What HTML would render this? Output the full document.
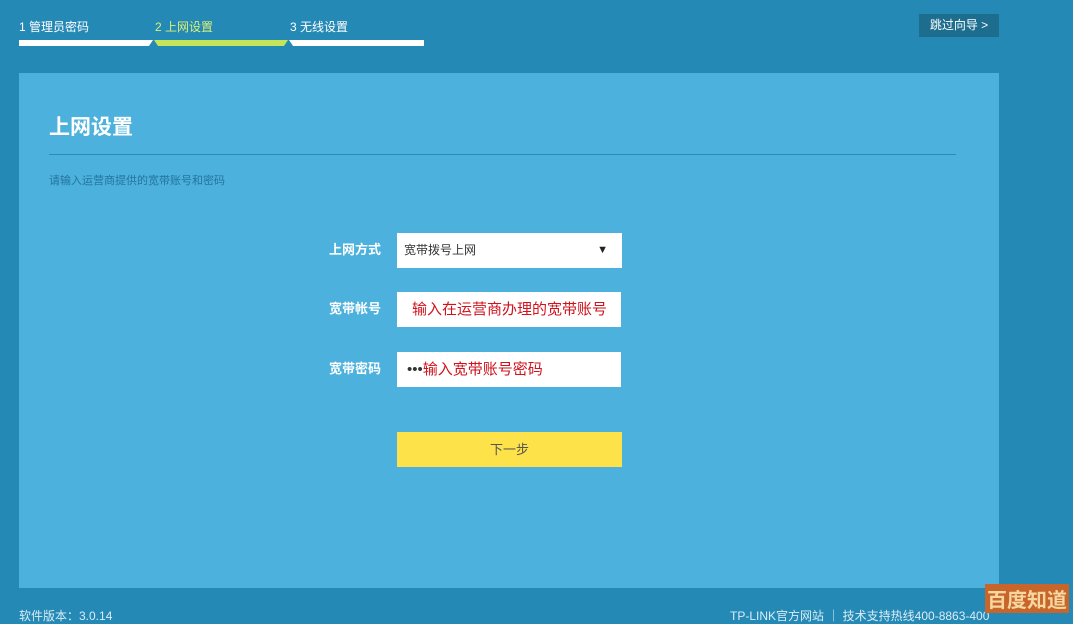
<!DOCTYPE html>
<html><head><meta charset="utf-8"><style>
*{margin:0;padding:0;box-sizing:border-box}
body{width:1073px;height:615px;overflow:hidden;background:#2589b6;font-family:"Liberation Sans","Noto Sans CJK SC",sans-serif;position:relative;color:#fff}
.step{position:absolute;top:18px;font-size:12px}
.bar{position:absolute;top:40px;height:6px}
.skip{position:absolute;left:919px;top:14px;width:80px;height:23px;background:#1c6d8e;font-size:12px;line-height:23px;text-align:center}
.panel{position:absolute;left:19px;top:73px;width:980px;height:515px;background:#4cb1dc}
h1{position:absolute;left:30px;top:38px;font-size:21px;font-weight:bold}
.hr{position:absolute;left:30px;top:81px;width:907px;height:1px;background:#2d8ab6}
.desc{position:absolute;left:30px;top:99px;font-size:11px;color:#2574a0}
.lbl{position:absolute;left:290px;width:72px;text-align:right;font-size:13px;font-weight:bold}
.inp{position:absolute;left:378px;width:224px;height:35px;background:#fff;font-size:15px;color:#d0121b;line-height:35px;padding-left:15px}
.btn{position:absolute;left:378px;top:359px;width:225px;height:35px;background:#fde24a;color:#555;font-size:13px;text-align:center;line-height:35px}
.foot{position:absolute;top:607px;font-size:12px;color:#d8ecf6}
</style></head><body>
<div class="step" style="left:19px">1 管理员密码</div>
<div class="step" style="left:155px;color:#d8f07a">2 上网设置</div>
<div class="step" style="left:290px">3 无线设置</div>
<div class="bar" style="left:19px;width:134px;background:#fff;clip-path:polygon(0 0,100% 0,97% 100%,0 100%)"></div>
<div class="bar" style="left:154px;width:134px;background:#c4e55a;clip-path:polygon(0 0,100% 0,97% 100%,3% 100%)"></div>
<div class="bar" style="left:289px;width:135px;background:#fff;clip-path:polygon(0 0,100% 0,100% 100%,3% 100%)"></div>
<div class="skip">跳过向导 &gt;</div>
<div class="panel">
<h1>上网设置</h1>
<div class="hr"></div>
<div class="desc">请输入运营商提供的宽带账号和密码</div>
<div class="lbl" style="top:166px">上网方式</div>
<div class="inp" style="top:160px;color:#333;font-size:12px;padding-left:7px;left:378px;width:225px">宽带拨号上网<span style="position:absolute;right:14px;font-size:11px;color:#222">▼</span></div>
<div class="lbl" style="top:225px">宽带帐号</div>
<div class="inp" style="top:219px">输入在运营商办理的宽带账号</div>
<div class="lbl" style="top:285px">宽带密码</div>
<div class="inp" style="top:279px;padding-left:10px"><span style="color:#333">•••</span>输入宽带账号密码</div>
<div class="btn">下一步</div>
</div>
<div class="foot" style="left:19px">软件版本：3.0.14</div>
<div class="foot" style="left:730px">TP-LINK官方网站 ｜ 技术支持热线400-8863-400</div>
<div style="position:absolute;left:985px;top:584px;font-size:20px;font-weight:bold;color:#f6d7a0;background:#c8652a;padding:0 2px">百度知道</div>
</body></html>
